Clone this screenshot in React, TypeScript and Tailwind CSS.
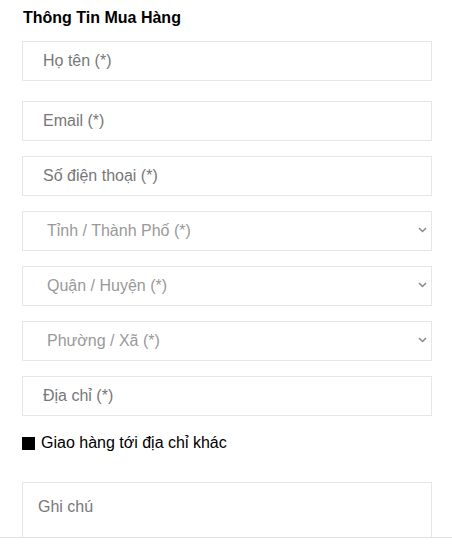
export default function App() {
  const inputCls =
    'block w-full h-[40px] border border-[#e6e6e6] bg-white pl-[20px] text-[16px] text-[#333] placeholder:text-[#777] outline-none'

  const selects = ['Tỉnh / Thành Phố (*)', 'Quận / Huyện (*)', 'Phường / Xã (*)']

  return (
    <div className="w-[452px] h-[538px] overflow-hidden border-b border-[#e2e2e2] bg-white font-['Liberation_Sans',Arial,sans-serif]">
      <div className="pl-[22px] pr-[20px] pt-[9px]">
        <h2 className="text-[16px] leading-[18px] font-bold text-black pl-[1px]">Thông Tin Mua Hàng</h2>

        <input className={inputCls + ' mt-[14px]'} placeholder="Họ tên (*)" />
        <input className={inputCls + ' mt-[20px]'} placeholder="Email (*)" />
        <input className={inputCls + ' mt-[15px]'} placeholder="Số điện thoại (*)" />

        {selects.map(s => (
          <div key={s} className="relative mt-[15px]">
            <select
              defaultValue=""
              className="block w-full h-[40px] appearance-none border border-[#e6e6e6] bg-white pl-[24px] text-[16px] text-[#999] outline-none"
            >
              <option value="" disabled>{s}</option>
            </select>
            <svg className="absolute right-[5px] top-[16px] pointer-events-none" width="9" height="6" viewBox="0 0 9 6" fill="none">
              <path d="M1 1l3.5 3.5L8 1" stroke="#888" strokeWidth="1.5" />
            </svg>
          </div>
        ))}

        <input className={inputCls + ' mt-[15px]'} placeholder="Địa chỉ (*)" />

        <label className="flex items-center gap-[6px] mt-[18px] h-[18px] text-[16px] text-black">
          <span className="block w-[13px] h-[13px] bg-black" />
          Giao hàng tới địa chỉ khác
        </label>

        <textarea
          className="block w-full h-[90px] mt-[30px] border border-[#e6e6e6] pl-[15px] pt-[12px] text-[16px] placeholder:text-[#777] outline-none resize-none"
          placeholder="Ghi chú"
        />
      </div>
    </div>
  )
}
